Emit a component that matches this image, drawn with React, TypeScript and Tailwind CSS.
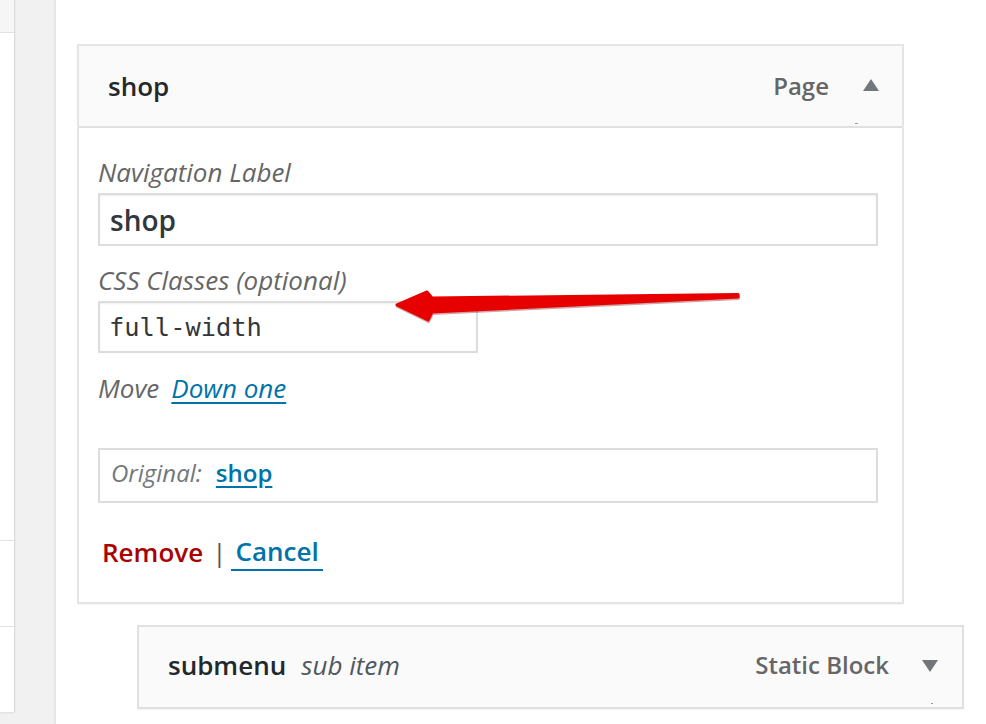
import React from 'react'

const sans = { fontFamily: '"Open Sans", "Noto Sans", sans-serif' }

function Arrow() {
  // red annotation arrow lying over the form
  return (
    <svg
      className="absolute left-[390px] top-[285px] pointer-events-none"
      width="356"
      height="42"
      viewBox="0 0 356 42"
    >
      <path
        d="M7 20 L37 7 L42 13 L348 9.5 L348 12 L42 27 L38 35 Z"
        fill="#7a0000"
        opacity="0.35"
        transform="translate(0.5 1.5)"
        stroke="#7a0000"
        strokeWidth="3"
        strokeLinejoin="round"
      />
      <path
        d="M7 20 L37 7 L42 13 L348 9.5 L348 12 L42 27 L38 35 Z"
        fill="#e60000"
        stroke="#e60000"
        strokeWidth="3"
        strokeLinejoin="round"
      />
    </svg>
  )
}

function TriUp() {
  return (
    <svg width="16" height="12" viewBox="0 0 16 12">
      <path d="M8 0 L16 12 L0 12 Z" fill="#72777c" />
    </svg>
  )
}

function TriDown() {
  return (
    <svg width="16" height="12" viewBox="0 0 16 12">
      <path d="M0 0 L16 0 L8 12 Z" fill="#72777c" />
    </svg>
  )
}

export default function App() {
  return (
    <div className="relative flex w-[986px] h-[724px] overflow-hidden bg-white" style={sans}>
      {/* Left sidebar */}
      <div className="w-[56px] h-full bg-[#f1f1f1] border-r-2 border-[#e6e6e6] shrink-0">
        <div className="w-[15px] h-[712px] bg-white border-r border-[#dcdcdc] shadow-[0_1px_2px_rgba(0,0,0,0.08)] flex flex-col">
          <div className="h-[33px] bg-[#f6f6f6] border-b border-[#e2e2e2]" />
          <div className="h-[508px] border-b border-[#e2e2e2]" />
          <div className="h-[86px] border-b border-[#e2e2e2]" />
          <div className="flex-1" />
        </div>
      </div>

      {/* Main */}
      <div className="flex-1 pl-[21px] pt-[44px] flex flex-col">
        <div className="w-[827px] border-2 border-[#e5e5e5] bg-white shadow-[0_1px_1px_rgba(0,0,0,0.04)]">
          {/* Header */}
          <div className="relative h-[82px] bg-[#fafafa] border-b-2 border-[#e0e0e0] flex items-center pl-[29px] pr-[23px]">
            <span className="text-[26px] leading-[36px] font-semibold text-[#23282d]">shop</span>
            <span className="ml-auto text-[24px] leading-[36px] font-semibold text-[#666]">Page</span>
            <span className="ml-[34px] mb-[2px]">
              <TriUp />
            </span>
            <span className="absolute left-[776px] bottom-[2px] w-[3px] h-[1px] bg-[#999]" />
          </div>

          {/* Body */}
          <div className="pl-[19px] pr-[24px] pt-[26px] pb-[31px]">
            <label className="block text-[26px] leading-[36px] italic text-[#666]">Navigation Label</label>
            <div className="mt-[3px] h-[53px] border-2 border-[#ddd] bg-white flex items-center px-[10px] shadow-[inset_0_1px_2px_rgba(0,0,0,0.07)]">
              <span className="text-[28px] leading-[36px] font-semibold text-[#32373c]">shop</span>
            </div>

            <label className="mt-[16px] block text-[26px] leading-[36px] italic text-[#666]">CSS Classes (optional)</label>
            <div className="mt-[3px] w-[380px] h-[52px] border-2 border-[#ddd] bg-white flex items-center pl-[9px] shadow-[inset_0_1px_2px_rgba(0,0,0,0.07)]">
              <span
                className="text-[25.4px] leading-[36px] text-[#32373c]"
                style={{ fontFamily: '"DejaVu Sans Mono", "Liberation Mono", monospace' }}
              >
                full-width
              </span>
            </div>

            <div className="mt-[17px] text-[26px] leading-[36px] italic text-[#666]">
              Move
              <a href="#" className="ml-[12px] text-[#0073aa] underline underline-offset-[4px]">
                Down one
              </a>
            </div>

            <div className="mt-[42px] h-[55px] border-2 border-[#ddd] flex items-center pl-[11px] pb-[5px]">
              <span className="text-[24px] leading-[36px] italic text-[#72777c]">Original:</span>
              <a
                href="#"
                className="ml-[14px] text-[24px] leading-[36px] font-semibold text-[#0073aa] underline underline-offset-[4px]"
              >
                shop
              </a>
            </div>

            <div className="mt-[30px] flex items-center text-[26px] leading-[36px]">
              <a href="#" className="ml-[4px] font-semibold text-[#a00]">Remove</a>
              <span className="ml-[9px] text-[#555]">|</span>
              <a href="#" className="ml-[5px] px-[4px] font-semibold text-[#0073aa] border-b-2 border-[#0073aa] leading-[36px]">
                Cancel
              </a>
            </div>
          </div>
        </div>

        {/* Submenu item */}
        <div className="relative mt-[21px] ml-[60px] w-[827px] h-[84px] border-2 border-[#e0e0e0] bg-[#fafafa] flex items-center pl-[29px] pr-[24px] pb-[4px] shadow-[0_1px_1px_rgba(0,0,0,0.04)]">
          <span className="text-[26px] leading-[36px] font-semibold text-[#23282d]">submenu</span>
          <span className="ml-[15px] text-[26px] leading-[36px] italic text-[#50575e]">sub item</span>
          <span className="ml-auto text-[24px] leading-[36px] font-semibold text-[#666]">Static Block</span>
          <span className="ml-[33px] mt-[2px]">
            <TriDown />
          </span>
          <span className="absolute left-[792px] bottom-[3px] w-[2px] h-[1px] bg-[#999]" />
        </div>
      </div>

      <Arrow />
    </div>
  )
}
